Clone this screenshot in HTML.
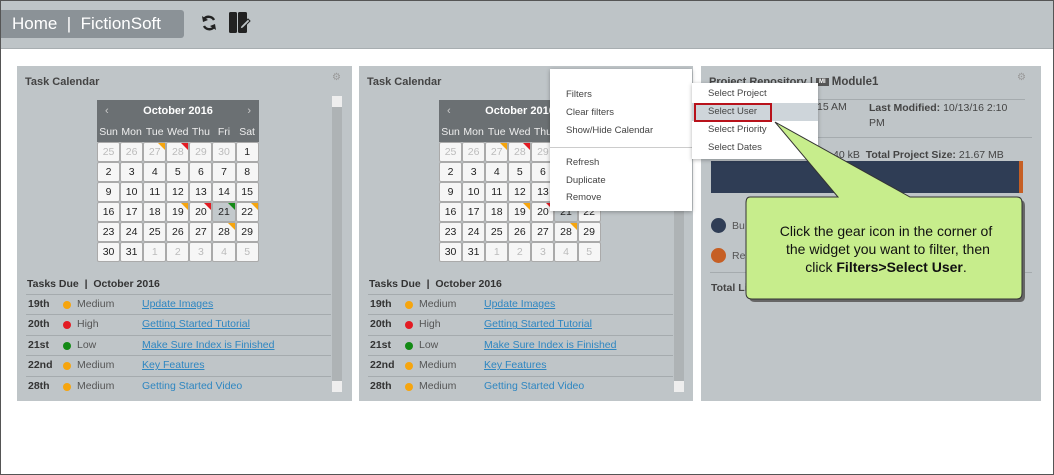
<!DOCTYPE html><html><head><meta charset="utf-8"><style>
*{margin:0;padding:0;box-sizing:border-box}
body{width:1054px;height:475px;position:relative;overflow:hidden;background:#fff;font-family:"Liberation Sans",sans-serif;color:#333}
.frame{position:absolute;left:0;top:0;width:1054px;height:475px;border:1px solid #555;pointer-events:none;z-index:50}
.top{position:absolute;left:0;top:0;width:1054px;height:49px;background:#bec4c7;border-bottom:1px solid #a8aeb1}
.home{position:absolute;left:1px;top:10px;width:183px;height:28px;background:#8b9297;color:#fff;font-size:17px;line-height:28px;padding-left:11px;border-radius:0 3px 3px 0}
.panel{position:absolute;top:66px;height:335px;background:#bfc5c8}
.ptitle{position:absolute;left:8px;top:10px;font-size:11px;font-weight:bold;color:#444}
.gear{position:absolute;font-size:10px;color:#999}
.cal{position:absolute;left:80px;top:34px;width:162px}
.ch{height:22px;background:#6b7073;color:#fff;font-size:11px;font-weight:bold;text-align:center;line-height:22px;position:relative}
.ch .l{position:absolute;left:8px;font-weight:normal;color:#ccc}.ch .r{position:absolute;right:8px;font-weight:normal;color:#ccc}
.cd{height:20px;background:#6b7073;color:#eee;font-size:10.5px;display:grid;grid-template-columns:repeat(7,23.1px);line-height:20px;text-align:center}
.g{display:grid;grid-template-columns:repeat(7,23.1px)}
.g span{height:20px;border:1px solid #aaa;border-radius:2px;background:#f6f6f6;font-size:10.5px;line-height:18px;text-align:center;color:#222;position:relative}
.g span.o{color:#bbb}
.g span.sel{background:#c3c9cc}
.t::after{content:"";position:absolute;right:0;top:0;border-style:solid;border-width:0 7px 7px 0}
.to::after{border-color:transparent #f6a50e transparent transparent}
.tr::after{border-color:transparent #e31b23 transparent transparent}
.tg::after{border-color:transparent #138a15 transparent transparent}
.sb{position:absolute;top:30px;width:10px;height:296px;background:#aeb3b5}
.sb::before{content:"";position:absolute;left:0;top:0;width:10px;height:11px;background:#eee}
.sb::after{content:"";position:absolute;left:0;bottom:0;width:10px;height:11px;background:#eee}
.td{position:absolute;left:10px;top:212px;font-size:10.5px;font-weight:bold;color:#333}
.rows{position:absolute;left:9px;top:228px;width:305px}
.row{height:20.4px;border-top:1px solid #a5abae;font-size:10.5px;line-height:19px;position:relative}
.row b{position:absolute;left:2px;color:#333}
.row i{position:absolute;left:37px;top:6px;width:8px;height:8px;border-radius:50%}
.row em{position:absolute;left:51px;font-style:normal;color:#555}
.row a{position:absolute;left:116px;color:#2e86c1;text-decoration:underline}
.menu{position:absolute;background:#fff;box-shadow:0 1px 4px rgba(0,0,0,.3);font-size:9.5px;color:#444}
.menu div{position:absolute;left:16px}
</style></head><body>
<div class="top"><div class="home">Home &nbsp;|&nbsp; FictionSoft</div>
<svg style="position:absolute;left:200px;top:13px" width="18" height="20" viewBox="0 0 18 20"><path d="M14 7A6 6 0 0 0 4 6" fill="none" stroke="#222" stroke-width="2.4"/><path d="M2 3l1 6 5-2z" fill="#222"/><path d="M4 13a6 6 0 0 0 10 1" fill="none" stroke="#222" stroke-width="2.4"/><path d="M16 17l-1-6-5 2z" fill="#222"/></svg>
<svg style="position:absolute;left:229px;top:12px" width="22" height="21" viewBox="0 0 22 21"><rect x="0" y="0" width="8" height="21" rx="1.5" fill="#222"/><rect x="9" y="0" width="9" height="21" rx="1.5" fill="#222"/><path d="M11 17l1-3 7-7 2 2-7 7z" fill="#bec4c7" stroke="#222" stroke-width="1"/></svg>
</div>

<div class="panel" style="left:17px;width:335px">
<div class="ptitle">Task Calendar</div><div class="gear" style="left:315px;top:6px">⚙</div>
<div class="cal"><div class="ch"><span class="l">‹</span>October 2016<span class="r">›</span></div>
<div class="cd"><span>Sun</span><span>Mon</span><span>Tue</span><span>Wed</span><span>Thu</span><span>Fri</span><span>Sat</span></div>
<div class="g"><span class="o">25</span><span class="o">26</span><span class="o t to">27</span><span class="o t tr">28</span><span class="o">29</span><span class="o">30</span><span>1</span>
<span>2</span><span>3</span><span>4</span><span>5</span><span>6</span><span>7</span><span>8</span>
<span>9</span><span>10</span><span>11</span><span>12</span><span>13</span><span>14</span><span>15</span>
<span>16</span><span>17</span><span>18</span><span class="t to">19</span><span class="t tr">20</span><span class="sel t tg">21</span><span class="t to">22</span>
<span>23</span><span>24</span><span>25</span><span>26</span><span>27</span><span class="t to">28</span><span>29</span>
<span>30</span><span>31</span><span class="o">1</span><span class="o">2</span><span class="o">3</span><span class="o">4</span><span class="o">5</span></div></div>
<div class="sb" style="left:315px"></div>
<div class="td">Tasks Due &nbsp;|&nbsp; October 2016</div>
<div class="rows">
<div class="row"><b>19th</b><i style="background:#f6a50e"></i><em>Medium</em><a>Update Images </a></div>
<div class="row"><b>20th</b><i style="background:#e31b23"></i><em>High</em><a>Getting Started Tutorial </a></div>
<div class="row"><b>21st</b><i style="background:#138a15"></i><em>Low</em><a>Make Sure Index is Finished </a></div>
<div class="row"><b>22nd</b><i style="background:#f6a50e"></i><em>Medium</em><a>Key Features </a></div>
<div class="row"><b>28th</b><i style="background:#f6a50e"></i><em>Medium</em><a style="text-decoration:none">Getting Started Video</a></div>
</div></div>

<div class="panel" style="left:359px;width:334px">
<div class="ptitle">Task Calendar</div>
<div class="cal"><div class="ch"><span class="l">‹</span>October 2016<span class="r">›</span></div>
<div class="cd"><span>Sun</span><span>Mon</span><span>Tue</span><span>Wed</span><span>Thu</span><span>Fri</span><span>Sat</span></div>
<div class="g"><span class="o">25</span><span class="o">26</span><span class="o t to">27</span><span class="o t tr">28</span><span class="o">29</span><span class="o">30</span><span>1</span>
<span>2</span><span>3</span><span>4</span><span>5</span><span>6</span><span>7</span><span>8</span>
<span>9</span><span>10</span><span>11</span><span>12</span><span>13</span><span>14</span><span>15</span>
<span>16</span><span>17</span><span>18</span><span class="t to">19</span><span class="t tr">20</span><span class="sel t tg">21</span><span class="t to">22</span>
<span>23</span><span>24</span><span>25</span><span>26</span><span>27</span><span class="t to">28</span><span>29</span>
<span>30</span><span>31</span><span class="o">1</span><span class="o">2</span><span class="o">3</span><span class="o">4</span><span class="o">5</span></div></div>
<div class="sb" style="left:315px"></div>
<div class="td">Tasks Due &nbsp;|&nbsp; October 2016</div>
<div class="rows">
<div class="row"><b>19th</b><i style="background:#f6a50e"></i><em>Medium</em><a>Update Images </a></div>
<div class="row"><b>20th</b><i style="background:#e31b23"></i><em>High</em><a>Getting Started Tutorial </a></div>
<div class="row"><b>21st</b><i style="background:#138a15"></i><em>Low</em><a>Make Sure Index is Finished </a></div>
<div class="row"><b>22nd</b><i style="background:#f6a50e"></i><em>Medium</em><a>Key Features </a></div>
<div class="row"><b>28th</b><i style="background:#f6a50e"></i><em>Medium</em><a style="text-decoration:none">Getting Started Video</a></div>
</div></div>

<div class="panel" style="left:701px;width:340px">
<div class="ptitle" style="font-size:11px">Project Repository | <span style="display:inline-block;background:#555;color:#fff;font-size:6px;padding:1px 3px;vertical-align:middle">MI</span> <span style="font-size:11.5px">Module1</span></div>
<div class="gear" style="left:316px;top:6px">⚙</div>
<div style="position:absolute;left:9px;top:33px;width:315px;border-top:1px solid #a5abae"></div>
<div style="position:absolute;left:116px;top:35px;font-size:10.5px;color:#444">15 AM</div>
<div style="position:absolute;left:168px;top:35px;font-size:10.5px;color:#444;line-height:15px;width:150px"><b>Last Modified:</b> 10/13/16 2:10 PM</div>
<div style="position:absolute;left:9px;top:71px;width:322px;border-top:1px solid #a5abae"></div>
<div style="position:absolute;left:132px;top:83px;font-size:10.5px;color:#444">40 kB &nbsp;<b>Total Project Size:</b> 21.67 MB</div>
<div style="position:absolute;left:10px;top:95px;width:312px;height:32px;background:#2f3d55"></div>
<div style="position:absolute;left:318px;top:95px;width:4px;height:32px;background:#c65f24"></div>
<div style="position:absolute;left:292px;top:128px;font-size:10.5px;color:#2e86c1">ge</div>
<div style="position:absolute;left:10px;top:152px;width:15px;height:15px;border-radius:50%;background:#2f3d55"></div>
<div style="position:absolute;left:31px;top:154px;font-size:10.5px;color:#555">Bu</div>
<div style="position:absolute;left:10px;top:182px;width:15px;height:15px;border-radius:50%;background:#c65f24"></div>
<div style="position:absolute;left:31px;top:184px;font-size:10.5px;color:#555">Re</div>
<div style="position:absolute;left:9px;top:206px;width:322px;border-top:1px solid #a5abae"></div>
<div style="position:absolute;left:10px;top:216px;font-size:10.5px;font-weight:bold;color:#444">Total Li</div>
</div>

<div class="menu" style="left:550px;top:69px;width:142px;height:142px">
<div style="top:20px">Filters</div><div style="top:38px">Clear filters</div><div style="top:56px">Show/Hide Calendar</div>
<div style="left:0;top:78px;width:142px;border-top:1px solid #ccc"></div>
<div style="top:88px">Refresh</div><div style="top:106px">Duplicate</div><div style="top:123px">Remove</div></div>
<div class="menu" style="left:692px;top:83px;width:126px;height:76px">
<div style="left:0;top:20px;width:126px;height:18px;background:#ced5da"></div>
<div style="top:5px">Select Project</div><div style="top:23px">Select User</div><div style="top:41px">Select Priority</div><div style="top:59px">Select Dates</div>
<div style="left:2px;top:20px;width:78px;height:19px;border:2px solid #b8121b"></div></div>

<svg style="position:absolute;left:740px;top:115px" width="300" height="195" viewBox="0 0 300 195">
<path d="M10 82Q6 82 6 88V178Q6 184 12 184H277Q282 184 282 178V88Q282 82 277 82H170L35 7L98 82Z" fill="#666" transform="translate(3,3)"/>
<path d="M10 82Q6 82 6 88V178Q6 184 12 184H277Q282 184 282 178V88Q282 82 277 82H170L35 7L98 82Z" fill="#c7ed8c" stroke="#333" stroke-width="1"/>
</svg>
<div style="position:absolute;left:752px;top:222px;width:268px;text-align:center;font-size:14px;line-height:18px;color:#111">Click the gear icon in the corner of<br>&nbsp;the widget you want to filter, then<br>click <b>Filters&gt;Select User</b>.</div>
<div class="frame"></div>
</body></html>
